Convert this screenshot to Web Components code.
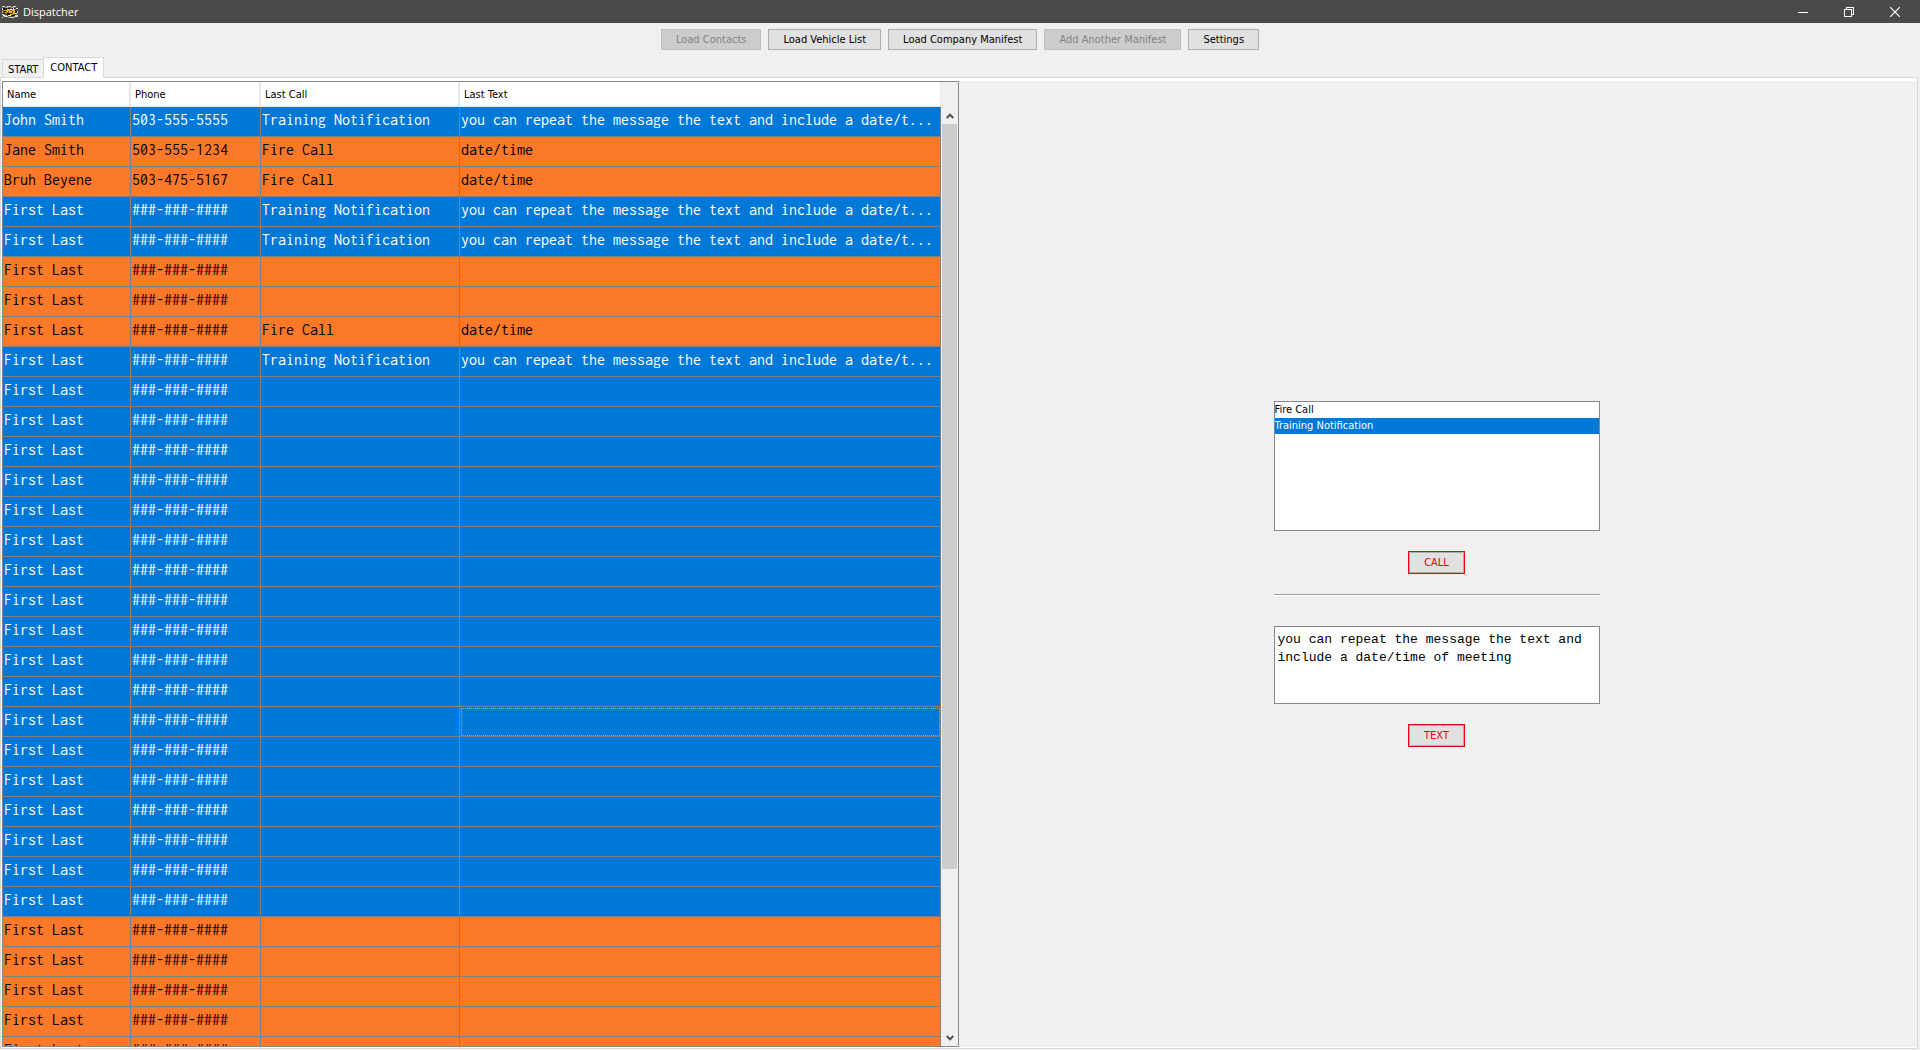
<!DOCTYPE html>
<html lang="en">
<head>
<meta charset="utf-8">
<title>Dispatcher</title>
<style>
  html, body { height: 100%; margin: 0; }
  body {
    font: 11px/16px "DejaVu Sans Condensed", Tahoma, sans-serif;
    color: #000;
    background: #f0f0f0;
    overflow: hidden;
    --face: #f0f0f0;
    --edge: #828790;
    --select: #0078d7;
    --alert: #fc7929;
    --mono: Inconsolata, Consolas, "DejaVu Sans Mono", monospace;
  }
</style>
</head>
<body>
<dispatcher-app></dispatcher-app>

<template id="title-bar">
  <style>
    :host { display: flex; align-items: center; height: 23px; flex: none; background: #4c4a48; color: #fff; padding: 0 2px; }
    h1 { margin: 0 auto 0 5px; font: 11px/20px "Open Sans", "Segoe UI", sans-serif; }
    button { width: 46px; height: 20px; padding: 0; border: 0; background: none; display: grid; place-items: center; }
    svg { display: block; }
  </style>
  <svg class="logo" width="16" height="12" viewBox="0 0 16 12" shape-rendering="crispEdges" aria-hidden="true">
    <rect width="16" height="12" fill="#57544f"/>
    <path fill="#d9d7d2" d="M0 0h3v1H0zM5 0h4v1H5zM11 0h3v1h-3zM0 2h1v2H0zM14 2h2v1h-2zM0 8h2v1H0zM2 10h4v1H2zM8 11h4v1H8zM13 9h3v2h-3zM15 5h1v2h-1zM0 11h1v1H0z"/>
    <path fill="#a9a49c" d="M3 1h3v1H3zM9 1h3v1H9zM0 5h1v2H0zM6 11h2v1H6zM12 10h1v2h-1zM3 9h2v1H3z"/>
    <path fill="#1c1813" d="M1 2h4v2H1zM6 2h2v1H6zM10 2h3v1h-3zM2 5h3v1H2zM5 7h4v2H5zM9 9h4v1H9zM13 4h2v3h-2zM1 7h2v1H1z"/>
    <path fill="#efb61e" d="M5 3h3v2H5zM2 4h3v1H2zM7 5h3v2H7zM10 3h3v2h-3zM11 5h2v3h-2zM8 8h3v1H8zM3 6h2v1H3z"/>
    <path fill="#fff" d="M8 3h2v1H8zM6 9h3v1H6zM5 5h1v1H5zM11 2h1v1h-1zM1 9h2v1H1zM13 7h2v1h-2z"/>
    <path fill="#9c3a20" d="M9 7h2v1H9zM5 6h2v1H5z"/>
  </svg>
  <h1><slot></slot></h1>
  <button aria-label="Minimize"><svg width="10" height="10" shape-rendering="crispEdges"><path d="M0 5.500h10" stroke="#fff"/></svg></button>
  <button aria-label="Restore"><svg width="10" height="10" shape-rendering="crispEdges"><path d="M.5 2.500h7v7h-7zM2.500 2.500v-2h7v7h-2" fill="none" stroke="#fff"/></svg></button>
  <button aria-label="Close"><svg width="10" height="10"><path d="M0 0l10 10M10 0L0 10" stroke="#fff" stroke-width="1.200"/></svg></button>
</template>

<template id="push-button">
  <style>
    :host { display: block; }
    button { font: inherit; line-height: 15px; color: #000; padding: 2px 14px; border: 1px solid #adadad; border-radius: 0; background: #e1e1e1; display: block; white-space: nowrap; }
    button:disabled { color: #838383; background: #ccc; border-color: #bfbfbf; }
    :host([danger]) button { color: #e8000d; outline: 1px solid #e8000d; outline-offset: 0; margin: 1px; width: 55px; padding: 2px 0; }
  </style>
  <button><slot></slot></button>
</template>

<template id="tool-bar">
  <style>
    :host { display: flex; justify-content: center; gap: 7px; padding: 6px 0 7px; flex: none; }
  </style>
  <slot></slot>
</template>

<template id="tab-strip">
  <style>
    :host { display: block; flex: none; z-index: 1; margin-bottom: -1px; }
    div { display: flex; align-items: flex-end; padding-left: 2px; }
    button { font: inherit; color: #000; border: 1px solid #d9d9d9; border-radius: 0; background: var(--face); padding: 2px 5px 0; height: 19px; border-right: 0; }
    button[aria-selected="true"] { height: 21px; background: #fff; border-right: 1px solid #d9d9d9; border-bottom: 0; padding: 0 6px; }
  </style>
  <div role="tablist">
    <button role="tab" aria-selected="false">START</button>
    <button role="tab" aria-selected="true">CONTACT</button>
  </div>
</template>

<template id="contact-table">
  <style>
    :host { display: flex; min-height: 0; border: 1px solid var(--edge); background: #fff; }
    .view { flex: 1; min-width: 0; overflow: hidden; }
    table { width: 100%; table-layout: fixed; border-collapse: separate; border-spacing: 0; }
    col.name { width: 128px; } col.phone { width: 130px; } col.call { width: 199px; }
    th { height: 22px; padding: 2px 0 0 4px; text-align: left; font-weight: normal; border-bottom: 1px solid #ececec; border-right: 2px solid #e8e8e8; }
    th:last-child { border-right-width: 1px; }
    td { height: 29px; padding: 0 0 0 1px; vertical-align: top; font: 16px/26px var(--mono); white-space: nowrap; overflow: hidden; border: solid #808080; border-width: 0 1px 1px 0; }
    tr.sel td { background: var(--select); color: #fff; }
    tr.alert td { background: var(--alert); color: #000; }
    td.focus { outline: 1px dotted #f0923c; outline-offset: -2px; }
    .bar { width: 17px; flex: none; display: flex; flex-direction: column; background: var(--face); padding-top: 25px; }
    .bar button { height: 17px; width: 17px; border: 0; padding: 0; background: none; display: grid; place-items: center; flex: none; }
    .track { flex: 1; padding: 0 1px; }
    .thumb { height: calc(100% * 14 / 17); background: #cdcdcd; }
  </style>
  <div class="view">
    <table>
      <colgroup><col class="name"><col class="phone"><col class="call"><col></colgroup>
      <thead><tr><th>Name</th><th>Phone</th><th>Last Call</th><th>Last Text</th></tr></thead>
      <tbody></tbody>
    </table>
  </div>
  <div class="bar">
    <button aria-label="Scroll up"><svg width="8" height="6"><path d="M0.700 5L4 1.700 7.300 5" fill="none" stroke="#505050" stroke-width="2"/></svg></button>
    <div class="track"><div class="thumb"></div></div>
    <button aria-label="Scroll down"><svg width="8" height="6"><path d="M0.700 1L4 4.300 7.300 1" fill="none" stroke="#505050" stroke-width="2"/></svg></button>
  </div>
</template>

<template id="message-panel">
  <style>
    :host { display: flex; align-items: center; justify-content: center; padding: 20px 2px 0 0; }
    form { width: 34%; min-width: 326px; display: flex; flex-direction: column; align-items: center; }
    select, textarea { box-sizing: border-box; width: 100%; margin: 0; border: 1px solid var(--edge); border-radius: 0; background: #fff; color: #000; outline: 0; overflow: hidden; resize: none; }
    select { height: 130px; padding: 0; font: inherit; margin-bottom: 20px; }
    option { height: 16px; min-height: 16px; box-sizing: border-box; padding: 1px 0 0; line-height: 16px; }
    option:checked { background: linear-gradient(#0078d7, #0078d7); color: #fff; }
    hr { box-sizing: border-box; width: 100%; margin: 20px 0 30px; border: solid; border-width: 1px 0; border-color: #a0a0a0 transparent #fff; }
    textarea { height: 78px; padding: 4px 3px; font: 13px/18px "Liberation Mono", "Courier New", monospace; margin-bottom: 20px; }
  </style>
  <form>
    <select size="8" aria-label="Call message"><option>Fire Call</option><option selected>Training Notification</option></select>
    <push-button danger>CALL</push-button>
    <hr>
    <textarea aria-label="Text message" spellcheck="false">you can repeat the message the text and include a date/time of meeting</textarea>
    <push-button danger>TEXT</push-button>
  </form>
</template>

<template id="dispatcher-app">
  <style>
    :host { display: flex; flex-direction: column; height: 100vh; background: var(--face); }
    main { flex: 1; min-height: 0; display: grid; grid-template: minmax(0, 1fr) / 1fr 1fr; margin: 0 2px 1px 0; padding: 3px 1px 1px; border: 1px solid #d9d9d9; background: var(--face); box-shadow: inset 1px 3px #fff, inset 0 -1px #fff; }
  </style>
  <title-bar>Dispatcher</title-bar>
  <tool-bar>
    <push-button disabled>Load Contacts</push-button>
    <push-button>Load Vehicle List</push-button>
    <push-button>Load Company Manifest</push-button>
    <push-button disabled>Add Another Manifest</push-button>
    <push-button>Settings</push-button>
  </tool-bar>
  <tab-strip></tab-strip>
  <main>
    <contact-table></contact-table>
    <message-panel></message-panel>
  </main>
</template>

<script>
  class TemplateElement extends HTMLElement {
    connectedCallback() {
      if (this.shadowRoot) return;
      const root = this.attachShadow({ mode: 'open' });
      root.append(document.getElementById(this.localName).content.cloneNode(true));
      this.ready(root);
    }
    ready() {}
  }

  class PushButton extends TemplateElement {
    ready(root) {
      const button = root.querySelector('button');
      button.type = 'button';
      button.disabled = this.hasAttribute('disabled');
    }
  }

  const TRAINING = ['sel', 'Training Notification', 'you can repeat the message the text and include a date/t...'];
  const FIRE = ['alert', 'Fire Call', 'date/time'];
  const placeholder = ([state, call = '', text = '']) => [state, 'First Last', '###-###-####', call, text];
  const CONTACTS = [
    ['sel', 'John Smith', '503-555-5555', TRAINING[1], TRAINING[2]],
    ['alert', 'Jane Smith', '503-555-1234', FIRE[1], FIRE[2]],
    ['alert', 'Bruh Beyene', '503-475-5167', FIRE[1], FIRE[2]],
    ...[TRAINING, TRAINING, ['alert'], ['alert'], FIRE, TRAINING].map(placeholder),
    ...Array.from({ length: 18 }, () => placeholder(['sel'])),
    ...Array.from({ length: 5 }, () => placeholder(['alert'])),
  ];
  const FOCUSED_ROW = 20;

  class ContactTable extends TemplateElement {
    ready(root) {
      const body = root.querySelector('tbody');
      CONTACTS.forEach(([state, ...cells], i) => {
        const row = body.insertRow();
        row.className = state;
        cells.forEach(text => { row.insertCell().textContent = text; });
        if (i === FOCUSED_ROW) row.lastChild.className = 'focus';
      });
    }
  }

  customElements.define('push-button', PushButton);
  customElements.define('title-bar', class extends TemplateElement {});
  customElements.define('tool-bar', class extends TemplateElement {});
  customElements.define('tab-strip', class extends TemplateElement {});
  customElements.define('contact-table', ContactTable);
  customElements.define('message-panel', class extends TemplateElement {});
  customElements.define('dispatcher-app', class extends TemplateElement {});
</script>
</body>
</html>
